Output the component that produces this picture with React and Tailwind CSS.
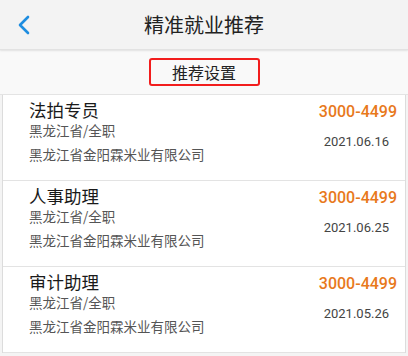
const jobs = [
  { titulo: "法拍专员", fecha: "2021.06.16" },
  { titulo: "人事助理", fecha: "2021.06.25" },
  { titulo: "审计助理", fecha: "2021.05.26" },
];

function App() {
  return (
    <main
      className="h-[356px] w-[408px] overflow-hidden bg-[#f4f4f4] text-[#222]"
      style={{ fontFamily: '"Noto Sans CJK SC", Roboto, sans-serif' }}
    >
      <header className="relative flex h-[50px] items-center justify-center border-b border-[#e2e2e2] bg-[#f3f3f3] shadow-[0_1px_2px_rgba(0,0,0,0.08)]">
        <svg
          className="absolute left-[17px] top-[15px]"
          width="14"
          height="20"
          viewBox="0 0 14 20"
          fill="none"
        >
          <path
            d="M11 2 L3 10 L11 18"
            stroke="#1e8de0"
            strokeWidth="2.6"
            strokeLinecap="round"
            strokeLinejoin="round"
          />
        </svg>
        <h1 className="text-[20px] leading-none text-[#222]">精准就业推荐</h1>
      </header>

      <div className="mt-[1px] flex h-[44px] items-center justify-center border-b border-[#e4e4e4] bg-[#f9f9f9]">
        <button className="-mt-[2px] flex h-[28px] w-[111px] items-center justify-center rounded-[3px] border-2 border-[#f21d1d] text-[16px] leading-none text-[#222]">
          推荐设置
        </button>
      </div>

      <section className="mx-[2px] border-x border-[#dcdcdc] bg-white">
        {jobs.map((job, index) => (
          <article
            key={index}
            className="flex h-[86px] justify-between border-b border-[#e3e3e3] pl-[26px] pr-[8px] pt-[4px]"
          >
            <div>
              <h2 className="text-[17.5px] leading-[22px] text-[#1a1a1a]">
                {job.titulo}
              </h2>
              <p className="text-[13.5px] leading-[19px] text-[#555]">
                黑龙江省/全职
              </p>
              <p className="mt-[5px] text-[13.5px] leading-[19px] text-[#555]">
                黑龙江省金阳霖米业有限公司
              </p>
            </div>
            <div className="flex flex-col items-end pt-[3px]">
              <p
                className="text-[16px] font-medium leading-[20px] text-[#e8791c]"
                style={{ fontFamily: "Roboto, sans-serif" }}
              >
                3000-4499
              </p>
              <p
                className="mr-[8px] mt-[11px] text-[13px] leading-[18px] text-[#444]"
                style={{ fontFamily: "Roboto, sans-serif" }}
              >
                {job.fecha}
              </p>
            </div>
          </article>
        ))}
      </section>
    </main>
  );
}

export default App;
